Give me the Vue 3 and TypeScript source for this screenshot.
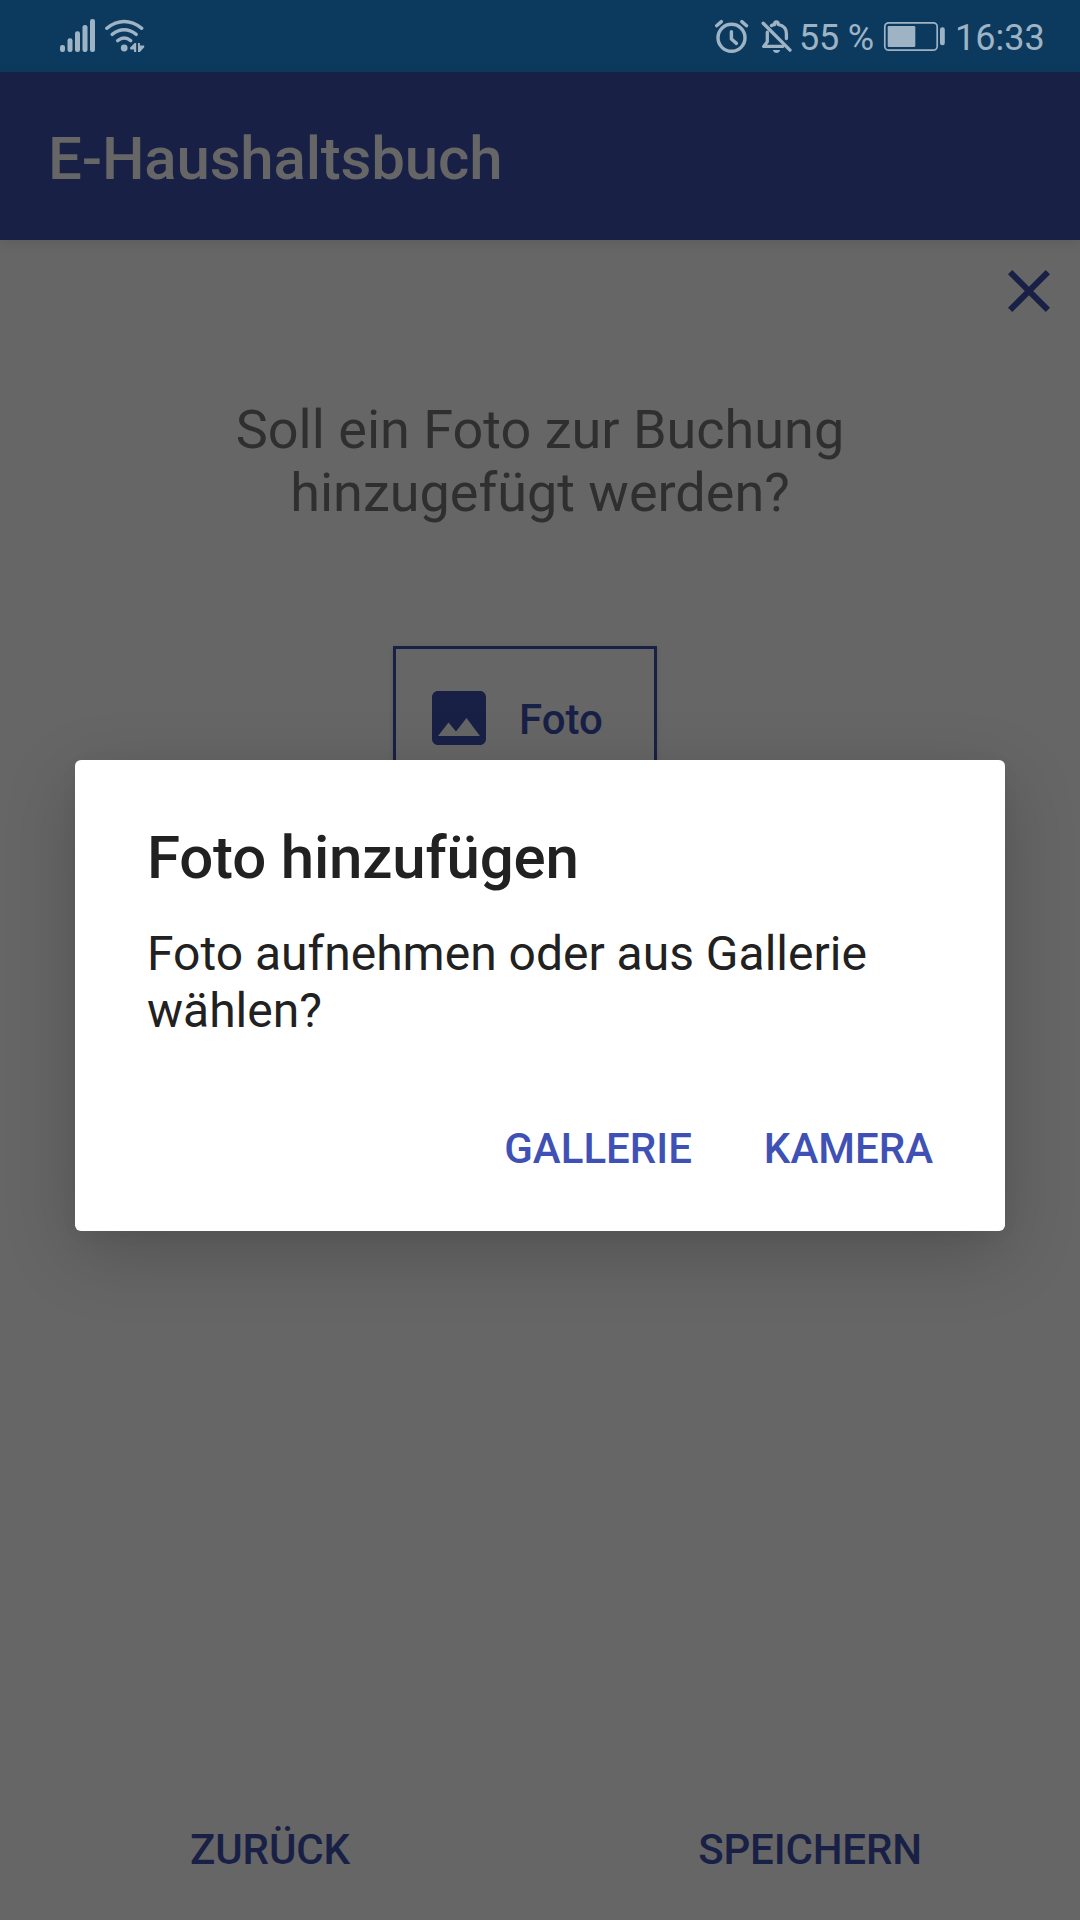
<script setup lang="ts">
const signalBars = [
  { x: 60, y: 45 },
  { x: 67.5, y: 38.3 },
  { x: 75, y: 31.3 },
  { x: 82.5, y: 25 },
  { x: 90, y: 19 },
]
const question = ['Soll ein Foto zur Buchung', 'hinzugefügt werden?']
const dialogActions = ['Gallerie', 'Kamera']
const footerActions = ['Zurück', 'Speichern']
</script>

<template>
  <div class="screen">
    <header class="status">
      <svg class="status-left" width="100" height="72" viewBox="50 0 100 72" aria-hidden="true">
        <rect v-for="b in signalBars" :key="b.x" :x="b.x" :y="b.y" width="5" :height="52 - b.y" rx="2.2" fill="currentColor" />
        <g fill="none" stroke="currentColor" stroke-width="3.4" stroke-linecap="round">
          <path d="M106.7 28.3Q124.2 14.8 141.8 28.3" />
          <path d="M112.2 34.4Q124.2 25.2 136.2 34.4" />
          <path d="M117.7 40.6Q124.2 35.6 130.7 40.6" />
        </g>
        <circle cx="124.2" cy="48" r="3.4" fill="currentColor" />
        <path d="M136.2 43v9h-2.2v-2.4h-3.4l-.8-1.6 4.8-5zM138 43h1.9v2.4h4.3v1.8l-4.3 4.8H138z" fill="currentColor" />
      </svg>
      <div class="status-right">
        <svg width="80" height="72" viewBox="712 0 80 72" fill="none" stroke="currentColor" stroke-width="3.4" stroke-linecap="round" stroke-linejoin="round" aria-hidden="true">
          <circle cx="731.5" cy="37.8" r="13.5" />
          <path d="M716.6 25.7l4.8-4.1M741.8 21.6l4.8 4.1M731.4 31.6v7.4l5 4.4" />
          <path d="M763.2 23.3l26.8 26.8" />
          <path d="M767.3 32.2v9.6l-3.6 4.6h19" stroke-width="3.3" />
          <path d="M771.4 25.6c1-.7 2-1 3.2-1.1v-.6c0-2.6 3.6-2.6 3.6 0v.6c5.2 1 8.2 4.4 8.2 9.3v4.7" stroke-width="3.3" />
          <path d="M772.8 50h7.4c-1 3.9-6.4 3.9-7.4 0z" fill="currentColor" stroke="none" />
        </svg>
        <span class="percent">55 %</span>
        <svg class="battery" width="64" height="72" viewBox="882 0 64 72" aria-hidden="true">
          <rect x="884.8" y="22.8" width="52.4" height="27.4" rx="4" fill="none" stroke="currentColor" stroke-width="1.7" />
          <rect x="887.7" y="26" width="27.6" height="21" rx="1.2" fill="currentColor" />
          <rect x="940" y="27.2" width="4.8" height="18" rx="2.2" fill="currentColor" />
        </svg>
        <span class="clock">16:33</span>
      </div>
    </header>

    <div class="appbar"><h1>E-Haushaltsbuch</h1></div>

    <main class="content">
      <button class="close" aria-label="Schließen">
        <svg width="72" height="72" viewBox="0 0 24 24"><path fill="currentColor" d="M19 6.41L17.59 5 12 10.59 6.41 5 5 6.41 10.59 12 5 17.59 6.41 19 12 13.41 17.59 19 19 17.59 13.41 12z" /></svg>
      </button>
      <p class="question"><span v-for="line in question" :key="line">{{ line }}</span></p>
      <button class="photo">
        <svg width="72" height="72" viewBox="0 0 24 24"><path fill="currentColor" d="M21 19V5c0-1.1-.9-2-2-2H5c-1.1 0-2 .9-2 2v14c0 1.1.9 2 2 2h14c1.1 0 2-.9 2-2zM8.5 13.5l2.5 3.01L14.5 12l4.5 6H5l3.5-4.5z" /></svg>
        <span>Foto</span>
      </button>
    </main>

    <footer class="footer">
      <button v-for="a in footerActions" :key="a">{{ a }}</button>
    </footer>

    <section class="dialog" role="dialog">
      <h2>Foto hinzufügen</h2>
      <p>Foto aufnehmen oder aus Gallerie wählen?</p>
      <div class="actions">
        <button v-for="a in dialogActions" :key="a">{{ a }}</button>
      </div>
    </section>
  </div>
</template>

<style>
body {
  margin: 0;
  background: #666;
}
</style>

<style scoped>
.screen {
  position: relative;
  display: flex;
  flex-direction: column;
  width: 1080px;
  height: 1920px;
  overflow: hidden;
  background: #666;
  font-family: Roboto, "Noto Sans", sans-serif;
}
svg {
  display: block;
  flex: none;
}
h1,
h2,
p {
  margin: 0;
}
button {
  padding: 0;
  border: 0;
  background: none;
  color: #192046;
  font: 500 42px/50px Roboto, "Noto Sans", sans-serif;
}
.status {
  display: flex;
  justify-content: space-between;
  box-sizing: border-box;
  height: 72px;
  padding: 0 36px 0 50px;
  background: #0c3a5e;
  color: #9eb3c4;
  font-size: 36px;
  line-height: 42px;
}
.status-right {
  display: flex;
  white-space: nowrap;
}
.status-right span {
  padding-top: 17px;
}
.percent {
  width: 83px;
  margin-left: 7px;
  letter-spacing: -0.2px;
}
.clock {
  width: 89px;
  margin-left: 9px;
}
.appbar {
  flex: none;
  box-sizing: border-box;
  height: 168px;
  padding: 52px 48px 0;
  background: #192046;
  color: #666;
  box-shadow: 0 3px 12px rgba(0, 0, 0, 0.1);
}
h1,
h2 {
  font-size: 60px;
  font-weight: 500;
  line-height: 70px;
  letter-spacing: -0.18px;
}
.content {
  display: flex;
  flex: 1;
  flex-direction: column;
  align-items: flex-start;
}
.close {
  align-self: flex-end;
  margin: 15px 15px 0 0;
}
.question {
  align-self: center;
  margin-top: 71px;
  color: #2f2f2f;
  font-size: 54px;
  line-height: 63px;
  text-align: center;
}
.question span {
  display: block;
}
.photo {
  display: flex;
  align-items: center;
  gap: 24px;
  box-sizing: border-box;
  width: 264px;
  height: 144px;
  margin: 122px 0 0 393px;
  padding-left: 27px;
  border: 3px solid #192046;
  box-shadow: 0 2px 5px rgba(0, 0, 0, 0.12);
}
.photo span {
  padding-top: 3px;
}
.footer {
  display: flex;
  flex: none;
  padding-bottom: 45px;
}
.footer button {
  flex: 1;
  letter-spacing: -0.15px;
  text-transform: uppercase;
}
.dialog {
  position: absolute;
  top: 760px;
  left: 75px;
  box-sizing: border-box;
  width: 930px;
  height: 471px;
  padding: 63px 72px 0;
  border-radius: 6px;
  background: #fff;
  color: #212121;
  box-shadow: 0 22px 72px rgba(0, 0, 0, 0.2), 0 3px 20px rgba(0, 0, 0, 0.03);
}
.dialog p {
  margin-top: 32px;
  font-size: 48px;
  line-height: 57px;
}
.actions {
  display: flex;
  justify-content: flex-end;
  gap: 72px;
  margin-top: 85px;
}
.actions button {
  color: #3f51b5;
  text-transform: uppercase;
}
</style>
